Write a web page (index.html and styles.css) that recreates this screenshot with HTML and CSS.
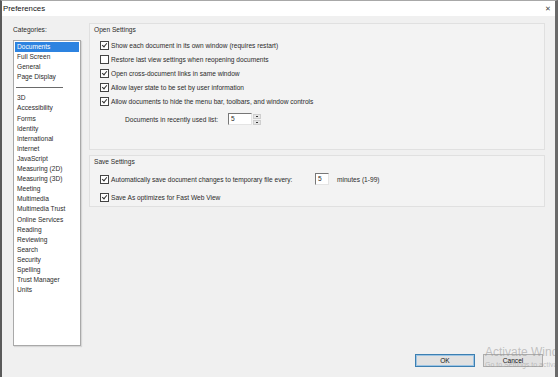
FILE: index.html
```html
<!DOCTYPE html>
<html lang="en">

<head>
    <meta charset="UTF-8">
    <meta name="viewport" content="width=device-width, initial-scale=1.0">
    <title>Preferences</title>
    <link rel="stylesheet" href="styles.css">
</head>

<body>
    <div class="window">
        <header class="titlebar">
            <span class="title">Preferences</span>
            <span class="close">&#x2715;</span>
        </header>

        <div class="content">
            <main class="main">
                <!-- Category list -->
                <aside class="sidebar">
                    <div class="label">Categories:</div>
                    <ul class="listbox">
                        <li class="selected">Documents</li>
                        <li>Full Screen</li>
                        <li>General</li>
                        <li>Page Display</li>
                        <li class="separator"><span></span></li>
                        <li>3D</li>
                        <li>Accessibility</li>
                        <li>Forms</li>
                        <li>Identity</li>
                        <li>International</li>
                        <li>Internet</li>
                        <li>JavaScript</li>
                        <li>Measuring (2D)</li>
                        <li>Measuring (3D)</li>
                        <li>Meeting</li>
                        <li>Multimedia</li>
                        <li>Multimedia Trust</li>
                        <li>Online Services</li>
                        <li>Reading</li>
                        <li>Reviewing</li>
                        <li>Search</li>
                        <li>Security</li>
                        <li>Spelling</li>
                        <li>Trust Manager</li>
                        <li>Units</li>
                    </ul>
                </aside>

                <!-- Settings panels -->
                <section class="settings">
                    <div class="group group-open">
                        <div class="group-title">Open Settings</div>
                        <label class="row"><span class="check on"></span>Show each document in its own window (requires restart)</label>
                        <label class="row"><span class="check"></span>Restore last view settings when reopening documents</label>
                        <label class="row"><span class="check on"></span>Open cross-document links in same window</label>
                        <label class="row"><span class="check on"></span>Allow layer state to be set by user information</label>
                        <label class="row"><span class="check on"></span>Allow documents to hide the menu bar, toolbars, and window controls</label>
                        <div class="row recent">
                            <span>Documents in recently used list:</span>
                            <span class="spin">
                                <span class="field">5</span>
                                <span class="arrows">
                                    <span class="arrow up"></span>
                                    <span class="arrow down"></span>
                                </span>
                            </span>
                        </div>
                    </div>

                    <div class="group group-save">
                        <div class="group-title">Save Settings</div>
                        <label class="row row-save"><span class="check on"></span><span class="autosave">Automatically save document changes to temporary file every:</span><span class="field small">5</span><span class="unit">minutes (1-99)</span></label>
                        <label class="row row-save"><span class="check on"></span>Save As optimizes for Fast Web View</label>
                    </div>
                </section>
            </main>

            <footer class="footer">
                <button class="btn default">OK</button>
                <button class="btn">Cancel</button>
            </footer>
        </div>

        <div class="watermark">
            <div class="wm-big">Activate Windows</div>
            <div class="wm-small">Go to Settings to activate Windows.</div>
        </div>
    </div>
</body>

</html>
```

FILE: styles.css
```css
/* Preferences dialog */
body {
    margin: 0;
    padding: 0;
    font-family: "Liberation Sans", Arial, sans-serif;
    font-size: 6.6px;
    color: #2b2b2b;
    background-color: #f0f0f0;
    overflow: hidden;
}

.window {
    position: relative;
    width: 558px;
    height: 377px;
    box-sizing: border-box;
    border-top: 1px solid #a8a8a8;
    border-left: 2px solid #5a5a5a;
    border-right: 3px solid #6a6a6a;
    display: flex;
    flex-direction: column;
    overflow: hidden;
}

.titlebar {
    height: 15px;
    background-color: #fff;
    display: flex;
    align-items: center;
    justify-content: space-between;
    padding: 0 4px 0 1px;
    font-size: 7.8px;
    color: #111;
}

.close {
    font-size: 7px;
    color: #444;
}

.content {
    flex: 1;
    display: flex;
    flex-direction: column;
    background-color: #f0f0f0;
}

.main {
    flex: 1;
    display: flex;
    gap: 8px;
    padding-left: 11px;
}

/* Sidebar list */
.sidebar {
    width: 68px;
    padding-top: 9px;
}

.label {
    height: 10px;
    line-height: 10px;
    margin-bottom: 5px;
}

.listbox {
    list-style: none;
    margin: 0;
    padding: 1px;
    height: 306px;
    box-sizing: border-box;
    background-color: #fff;
    border: 1px solid #a9a9a9;
    box-shadow: 1px 1px 1px rgba(0, 0, 0, 0.1);
}

.listbox li {
    height: 10.1px;
    line-height: 10.1px;
    padding-left: 2px;
    white-space: nowrap;
}

.listbox li.selected {
    background-color: #2d83e0;
    color: #fff;
}

.listbox li.separator {
    height: 11px;
    display: flex;
    align-items: center;
    padding-left: 1px;
}

.listbox li.separator span {
    display: block;
    width: 47px;
    border-top: 1px solid #6a6a6a;
}

/* Settings groups */
.settings {
    width: 456px;
    padding-top: 7px;
    display: flex;
    flex-direction: column;
    gap: 5px;
}

.group {
    border: 1px solid #e0e0e0;
    background-color: #f3f3f3;
    padding: 1px 0 0 4px;
}

.group-open {
    height: 127px;
    box-sizing: border-box;
}

.group-save {
    height: 52px;
    box-sizing: border-box;
}

.group-title {
    height: 10px;
    line-height: 10px;
    margin-bottom: 3px;
}

.row {
    display: flex;
    align-items: center;
    height: 14px;
    padding-left: 6px;
    white-space: nowrap;
}

.row-save {
    height: 18px;
}

.check {
    width: 7px;
    height: 7px;
    border: 1px solid #444;
    background-color: #fff;
    margin-right: 2px;
    position: relative;
}

.check.on::after {
    content: "";
    position: absolute;
    left: 2px;
    top: 0px;
    width: 2px;
    height: 4px;
    border-right: 1px solid #333;
    border-bottom: 1px solid #333;
    transform: rotate(40deg);
}

.recent {
    padding-left: 31px;
    margin-top: 4px;
    gap: 10px;
}

.spin {
    display: flex;
    align-items: center;
    gap: 1px;
}

.field {
    display: inline-block;
    width: 20px;
    height: 10px;
    line-height: 10px;
    background-color: #fff;
    border-top: 1px solid #777;
    border-left: 1px solid #777;
    border-right: 1px solid #e4e4e4;
    border-bottom: 1px solid #e4e4e4;
    padding-left: 2px;
    box-sizing: content-box;
}

.field.small {
    width: 10px;
}

.arrows {
    display: flex;
    flex-direction: column;
    gap: 1px;
}

.arrow {
    width: 8px;
    height: 5px;
    background-color: #e6e6e6;
    border: 1px solid #cfcfcf;
    box-sizing: border-box;
    position: relative;
}

.arrow::after {
    content: "";
    position: absolute;
    left: 2px;
    top: 1px;
    width: 2px;
    height: 1px;
    background-color: #333;
}

.autosave {
    width: 204px;
}

.unit {
    margin-left: 8px;
}

/* Footer buttons */
.footer {
    height: 29px;
    display: flex;
    justify-content: flex-end;
    gap: 8px;
    padding-right: 12px;
    box-sizing: border-box;
    padding-top: 6px;
}

.btn {
    width: 60px;
    height: 13px;
    padding: 0;
    font-family: "Liberation Sans", Arial, sans-serif;
    font-size: 6.6px;
    color: #111;
    background-color: #e1e1e1;
    border: 1px solid #adadad;
}

.btn.default {
    border: 1px solid #3c7fb1;
    box-shadow: inset 0 0 0 1px #9cc4e4;
}

/* Activation watermark over the corner */
.watermark {
    position: absolute;
    left: 483px;
    top: 344px;
    color: rgba(150, 150, 150, 0.55);
    white-space: nowrap;
    pointer-events: none;
}

.wm-big {
    font-size: 12px;
    line-height: 15px;
}

.wm-small {
    font-size: 7px;
    line-height: 10px;
}
```
